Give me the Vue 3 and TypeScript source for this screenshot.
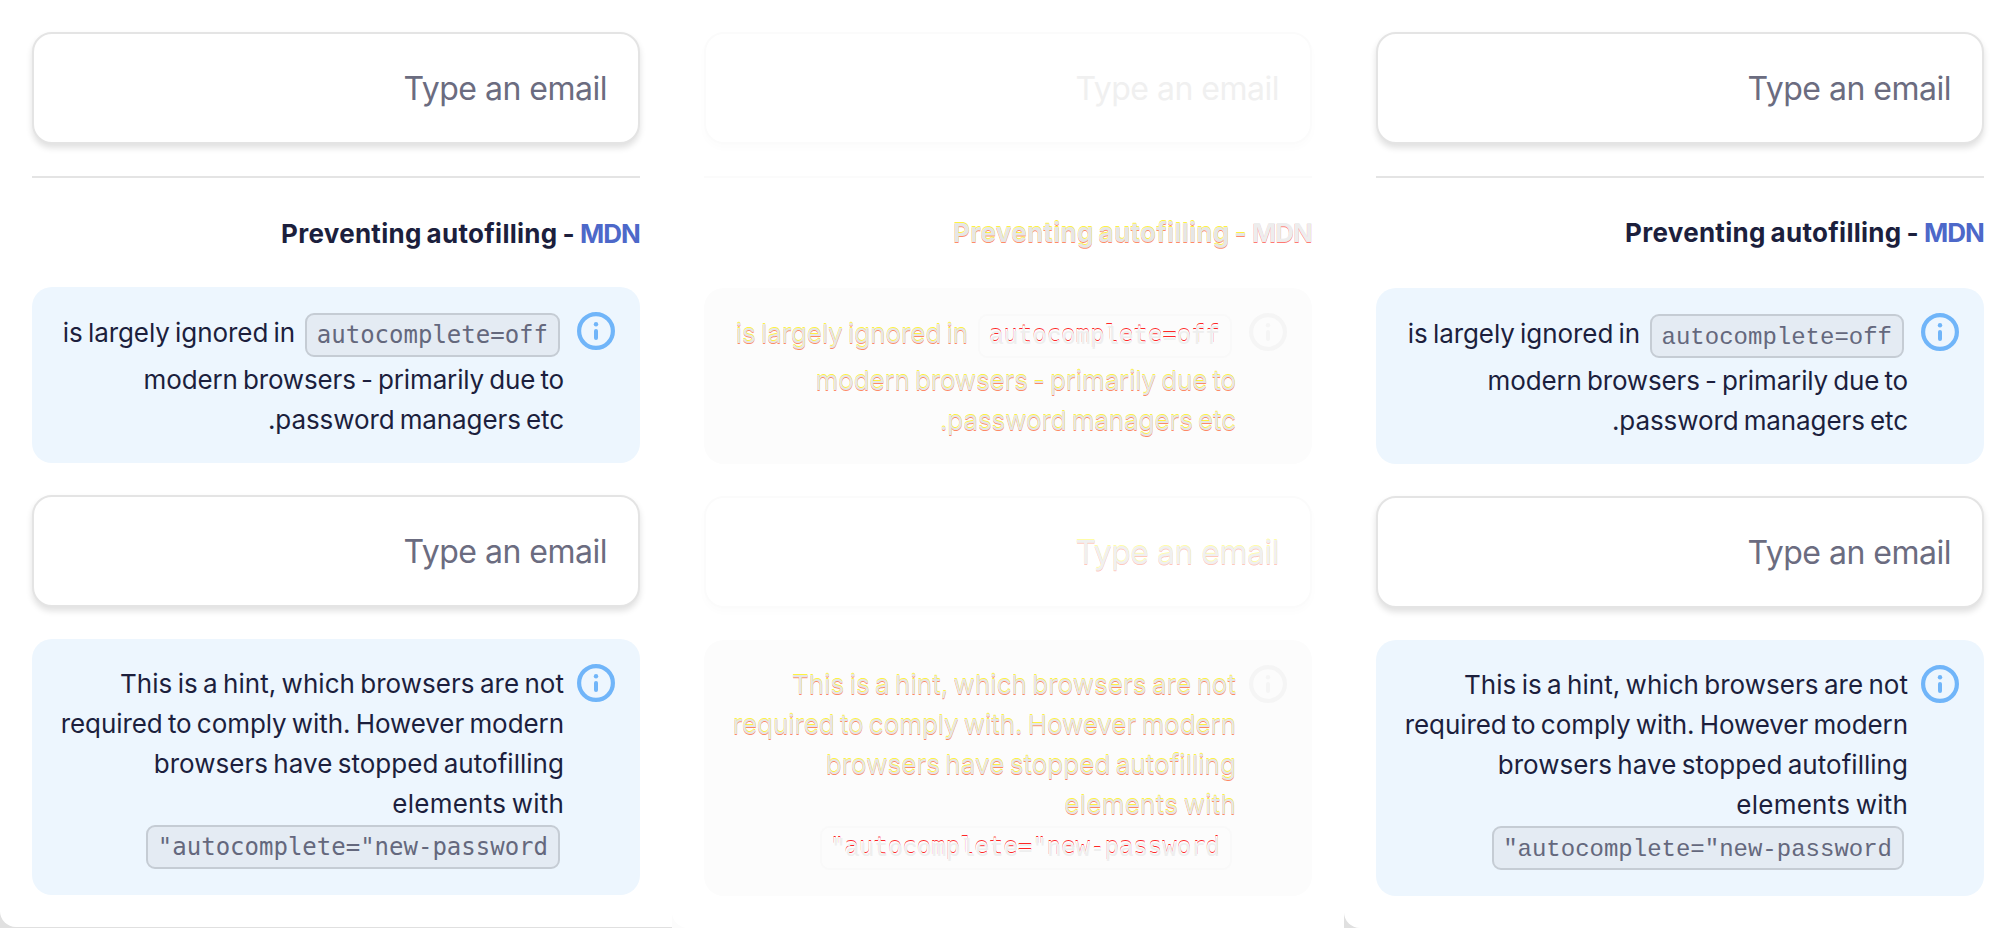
<script setup lang="ts">
interface Line {
  text: string
  spacing: number
}

interface Panel {
  kind: 'before' | 'diff' | 'after'
}

const panels: Panel[] = [{ kind: 'before' }, { kind: 'diff' }, { kind: 'after' }]

const ignored: Line = { text: 'is largely ignored in', spacing: -0.07 }
const ignoredRest: Line[] = [
  { text: 'modern browsers - primarily due to', spacing: -0.14 },
  { text: '.password managers etc', spacing: -0.1 },
]
const hint: Line[] = [
  { text: 'This is a hint, which browsers are not', spacing: 0.03 },
  { text: 'required to comply with. However modern', spacing: -0.07 },
  { text: 'browsers have stopped autofilling', spacing: 0.03 },
  { text: 'elements with', spacing: 0.23 },
]
const offCode = 'autocomplete=off'
const newCode = '"autocomplete="new-password'
const spacing = (line: Line) => ({ letterSpacing: `${line.spacing}px` })
</script>

<template>
  <main class="board">
    <section v-for="panel in panels" :key="panel.kind" class="panel" :class="panel.kind">
      <div class="field"><span class="placeholder">Type an email</span></div>
      <div class="rule"></div>
      <h2 class="heading"><span class="lead">Preventing autofilling - </span><a class="link">MDN</a></h2>

      <div class="note">
        <div class="copy">
          <div class="mixed">
            <span class="line" :style="spacing(ignored)">{{ ignored.text }}</span>
            <code class="code"><span v-if="panel.kind === 'diff'" class="ghost" aria-hidden="true">{{ offCode }}</span><span class="glyphs">{{ offCode }}</span></code>
          </div>
          <span v-for="line in ignoredRest" :key="line.text" class="line" :style="spacing(line)">{{ line.text }}</span>
        </div>
        <svg class="icon" viewBox="0 0 38 38">
          <circle class="ring" cx="19" cy="19" r="16.9" />
          <circle class="dot" cx="19" cy="12.2" r="2.2" />
          <rect class="dot" x="17" y="17" width="4" height="11" rx="2" />
        </svg>
      </div>

      <div class="field second"><span class="placeholder">Type an email</span></div>

      <div class="note">
        <div class="copy">
          <span v-for="line in hint" :key="line.text" class="line" :style="spacing(line)">{{ line.text }}</span>
          <code class="code wide"><span v-if="panel.kind === 'diff'" class="ghost" aria-hidden="true">{{ newCode }}</span><span class="glyphs">{{ newCode }}</span></code>
        </div>
        <svg class="icon" viewBox="0 0 38 38">
          <circle class="ring" cx="19" cy="19" r="16.9" />
          <circle class="dot" cx="19" cy="12.2" r="2.2" />
          <rect class="dot" x="17" y="17" width="4" height="11" rx="2" />
        </svg>
      </div>
    </section>
  </main>
</template>

<style>
body {
  background: #fff;
}
</style>

<style scoped>
.board {
  display: grid;
  grid-template-columns: repeat(3, 672px);
  width: 2016px;
  height: 928px;
  overflow: hidden;
  font-family: Inter, "Liberation Sans", sans-serif;
  background: linear-gradient(90deg, #e0e0e0 0 672px, #fcfcfc 672px 1344px, #e0e0e0 1344px);
}

.panel {
  --ink: #1c1f3d;
  --muted: #6b6c80;
  --accent: #4d68c9;
  --edge: #e4e4e4;
  --tint: #edf6fe;
  --chip: #e4ebf3;
  --chip-edge: #c5ccd4;
  --chip-ink: #64687d;
  --icon: #70b5f9;
  box-sizing: border-box;
  display: flex;
  flex-direction: column;
  height: 928px;
  padding: 32px;
  background: #fff;
  border-bottom-left-radius: 16px;
}

.before {
  height: 927px;
}

.diff {
  --ink: #e6e6e6;
  --muted: #f0f0f0;
  --accent: #ededed;
  --edge: #fbfbfb;
  --tint: #fcfcfc;
  --chip: #fcfcfc;
  --chip-edge: #f9f9f9;
  --chip-ink: #eee;
  --icon: #f5f5f5;
}

.field {
  box-sizing: border-box;
  flex: none;
  display: flex;
  align-items: center;
  justify-content: flex-end;
  height: 112px;
  padding: 2px 31px 0 0;
  border: 2px solid var(--edge);
  border-radius: 20px;
  background: #fff;
  box-shadow: 0 4px 6px rgba(0, 0, 0, 0.12);
}

.diff .field {
  box-shadow: 0 4px 8px rgba(0, 0, 0, 0.015);
}

.placeholder {
  color: var(--muted);
  font-size: 32px;
  line-height: 40px;
  letter-spacing: -0.5px;
  white-space: pre;
}

.rule {
  flex: none;
  height: 2px;
  margin-top: 32px;
  background: var(--edge);
}

.heading {
  flex: none;
  margin: 36px 0 33px;
  color: var(--ink);
  font-size: 26px;
  font-weight: 700;
  line-height: 40px;
  text-align: right;
  white-space: pre;
}

.diff .heading,
.after .heading {
  margin-top: 35px;
  margin-bottom: 35px;
}

.lead {
  letter-spacing: 0.28px;
  word-spacing: -1.5px;
}

.link {
  color: var(--accent);
  letter-spacing: -0.9px;
}

.note {
  box-sizing: border-box;
  flex: none;
  display: flex;
  justify-content: flex-end;
  gap: 13px;
  padding: 25px 25px 0 0;
  height: 176px;
  border-radius: 20px;
  background: var(--tint);
}

.note:last-child {
  height: 256px;
}

.field.second {
  margin: 32px 0;
}

.copy {
  display: flex;
  flex-direction: column;
  align-items: flex-end;
}

.mixed {
  display: flex;
  align-items: flex-start;
  gap: 10px;
  height: 47px;
  padding-top: 1px;
}

.line {
  color: var(--ink);
  font-size: 26px;
  line-height: 40px;
  word-spacing: -2px;
  white-space: pre;
}

.code {
  position: relative;
  box-sizing: border-box;
  display: block;
  width: 255px;
  height: 44px;
  margin-right: 4px;
  padding-right: 10px;
  border: 2px solid var(--chip-edge);
  border-radius: 9px;
  background: var(--chip);
  color: var(--chip-ink);
  font-family: "DejaVu Sans Mono", monospace;
  font-size: 24px;
  line-height: 40px;
  text-align: right;
  white-space: pre;
}

.code.wide {
  width: 414px;
  margin-top: 1px;
}

.diff .code,
.after .code {
  width: 254px;
}

.diff .code.wide,
.after .code.wide {
  width: 412px;
}

.glyphs {
  position: relative;
}

.diff .glyphs,
.after .glyphs {
  font-family: "Liberation Mono", monospace;
}

.icon {
  flex: none;
  width: 38px;
  height: 38px;
}

.ring {
  fill: none;
  stroke: var(--icon);
  stroke-width: 4.2;
}

.dot {
  fill: var(--icon);
}

/* Changed pixels sit on the upper and lower edges of the glyphs. */
.diff .line,
.diff .lead {
  text-shadow: 0 -1px 0 rgba(255, 240, 0, 0.75), 0 1px 0 rgba(255, 60, 0, 0.6);
}

.diff .link {
  text-shadow: 0 1px 0 rgba(255, 30, 20, 0.6);
}

.diff .second .placeholder {
  text-shadow: 0 -1px 0 rgba(255, 250, 0, 0.35), 0 1px 0 rgba(255, 60, 20, 0.3);
}

.ghost {
  position: absolute;
  top: -1px;
  right: 10px;
  color: var(--chip);
  text-shadow: 0 -1px 0 rgba(255, 0, 0, 0.85);
}
</style>
